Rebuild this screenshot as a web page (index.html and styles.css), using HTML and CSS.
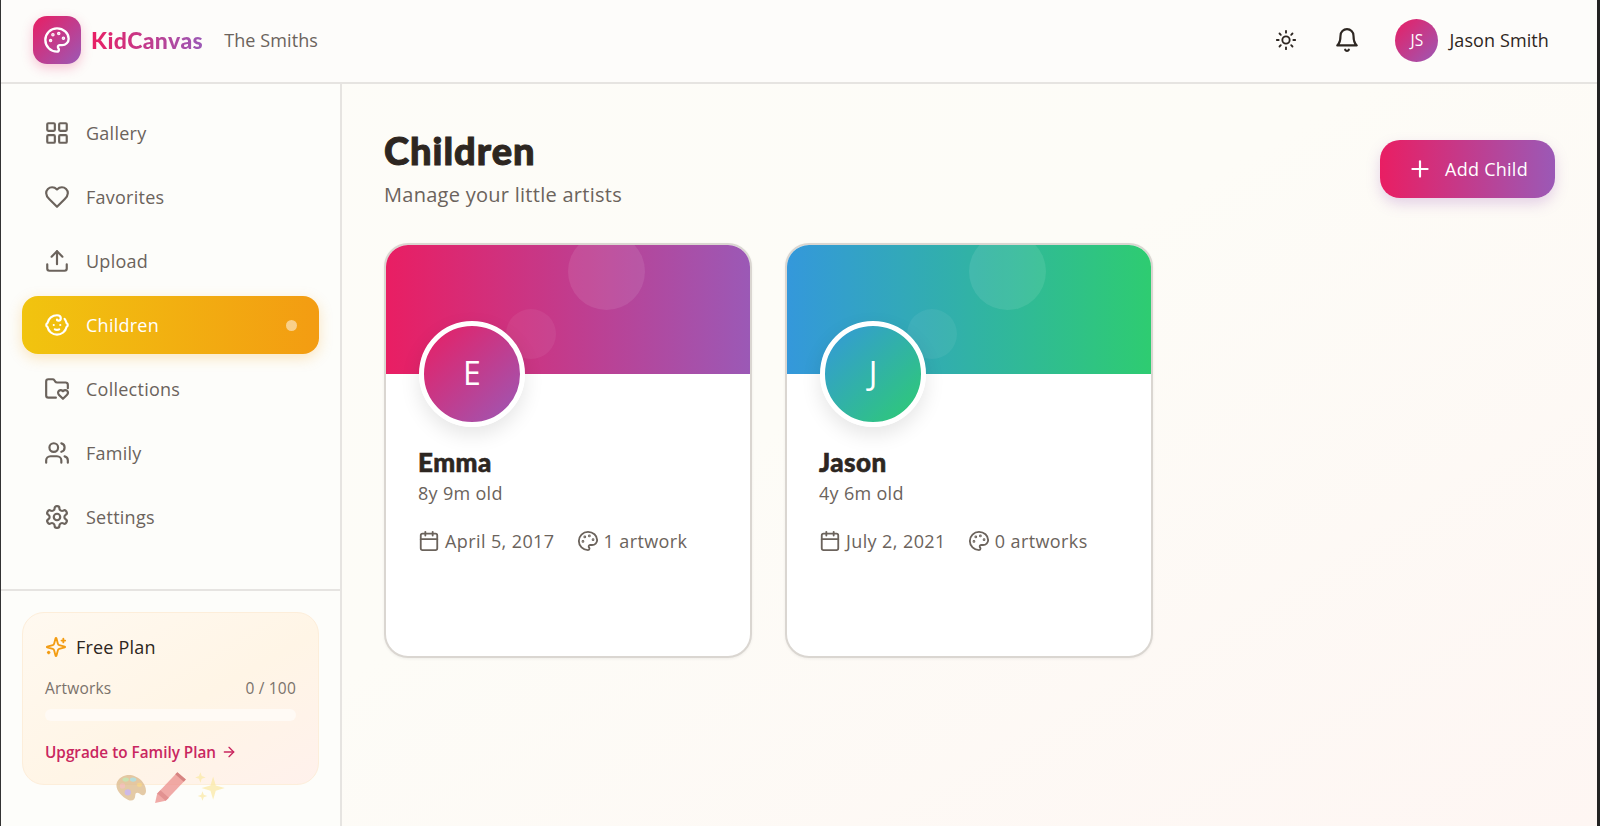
FILE: index.html
```html
<!DOCTYPE html>
<html lang="en">
<head>
    <meta charset="UTF-8">
    <meta name="viewport" content="width=device-width, initial-scale=1.0">
    <title>KidCanvas - Children</title>
    <link rel="stylesheet" href="styles.css">
</head>
<body>
    <svg class="hideclass">
        <defs>
            <symbol id="i-palette" viewBox="0 0 24 24"><circle cx="13.5" cy="6.5" r=".5" fill="currentColor"/><circle cx="17.5" cy="10.5" r=".5" fill="currentColor"/><circle cx="8.5" cy="7.5" r=".5" fill="currentColor"/><circle cx="6.5" cy="12.5" r=".5" fill="currentColor"/><path d="M12 2C6.5 2 2 6.5 2 12s4.5 10 10 10c.926 0 1.648-.746 1.648-1.688 0-.437-.18-.835-.437-1.125-.29-.289-.438-.652-.438-1.125a1.64 1.64 0 0 1 1.668-1.668h1.996c3.051 0 5.555-2.503 5.555-5.554C21.965 6.012 17.461 2 12 2z"/></symbol>
            <symbol id="i-grid" viewBox="0 0 24 24"><rect x="3" y="3" width="7" height="7" rx="1"/><rect x="14" y="3" width="7" height="7" rx="1"/><rect x="14" y="14" width="7" height="7" rx="1"/><rect x="3" y="14" width="7" height="7" rx="1"/></symbol>
            <symbol id="i-heart" viewBox="0 0 24 24"><path d="M19 14c1.49-1.46 3-3.21 3-5.5A5.5 5.5 0 0 0 16.5 3c-1.76 0-3 .5-4.5 2-1.5-1.5-2.74-2-4.5-2A5.5 5.5 0 0 0 2 8.5c0 2.3 1.5 4.05 3 5.5l7 7Z"/></symbol>
            <symbol id="i-upload" viewBox="0 0 24 24"><path d="M21 15v4a2 2 0 0 1-2 2H5a2 2 0 0 1-2-2v-4"/><path d="M17 8l-5-5-5 5"/><path d="M12 3v12"/></symbol>
            <symbol id="i-baby" viewBox="0 0 24 24"><path d="M9 12h.01"/><path d="M15 12h.01"/><path d="M10 16c.5.3 1.2.5 2 .5s1.5-.2 2-.5"/><path d="M19 6.3a9 9 0 0 1 1.8 3.9 2 2 0 0 1 0 3.6 9 9 0 0 1-17.6 0 2 2 0 0 1 0-3.6A9 9 0 0 1 12 3c2 0 3.5 1.1 3.5 2.5s-.9 2.5-2 2.5c-.8 0-1.5-.4-1.5-1"/></symbol>
            <symbol id="i-folder" viewBox="0 0 24 24"><path d="M11 20H4a2 2 0 0 1-2-2V5a2 2 0 0 1 2-2h3.9a2 2 0 0 1 1.69.9l.81 1.2a2 2 0 0 0 1.67.9H20a2 2 0 0 1 2 2v3.3"/><path d="M13.9 17.45c-1.2-1.2-1.14-2.8-.2-3.73a2.43 2.43 0 0 1 3.44 0l.36.34.34-.34a2.43 2.43 0 0 1 3.45-.01c.95.95 1 2.53-.2 3.74L17.5 21Z"/></symbol>
            <symbol id="i-users" viewBox="0 0 24 24"><path d="M16 21v-2a4 4 0 0 0-4-4H6a4 4 0 0 0-4 4v2"/><circle cx="9" cy="7" r="4"/><path d="M22 21v-2a4 4 0 0 0-3-3.87"/><path d="M16 3.13a4 4 0 0 1 0 7.75"/></symbol>
            <symbol id="i-gear" viewBox="0 0 24 24"><path d="M12.22 2h-.44a2 2 0 0 0-2 2v.18a2 2 0 0 1-1 1.73l-.43.25a2 2 0 0 1-2 0l-.15-.08a2 2 0 0 0-2.73.73l-.22.38a2 2 0 0 0 .73 2.73l.15.1a2 2 0 0 1 1 1.72v.51a2 2 0 0 1-1 1.74l-.15.09a2 2 0 0 0-.73 2.73l.22.38a2 2 0 0 0 2.73.73l.15-.08a2 2 0 0 1 2 0l.43.25a2 2 0 0 1 1 1.73V20a2 2 0 0 0 2 2h.44a2 2 0 0 0 2-2v-.18a2 2 0 0 1 1-1.73l.43-.25a2 2 0 0 1 2 0l.15.08a2 2 0 0 0 2.73-.73l.22-.39a2 2 0 0 0-.73-2.73l-.15-.08a2 2 0 0 1-1-1.74v-.5a2 2 0 0 1 1-1.74l.15-.09a2 2 0 0 0 .73-2.73l-.22-.38a2 2 0 0 0-2.73-.73l-.15.08a2 2 0 0 1-2 0l-.43-.25a2 2 0 0 1-1-1.73V4a2 2 0 0 0-2-2z"/><circle cx="12" cy="12" r="3"/></symbol>
            <symbol id="i-sun" viewBox="0 0 24 24"><circle cx="12" cy="12" r="4"/><path d="M12 2v2"/><path d="M12 20v2"/><path d="M4.93 4.93l1.41 1.41"/><path d="M17.66 17.66l1.41 1.41"/><path d="M2 12h2"/><path d="M20 12h2"/><path d="M6.34 17.66l-1.41 1.41"/><path d="M19.07 4.93l-1.41 1.41"/></symbol>
            <symbol id="i-bell" viewBox="0 0 24 24"><path d="M6 8a6 6 0 0 1 12 0c0 7 3 9 3 9H3s3-2 3-9"/><path d="M10.3 21a1.94 1.94 0 0 0 3.4 0"/></symbol>
            <symbol id="i-plus" viewBox="0 0 24 24"><path d="M5 12h14"/><path d="M12 5v14"/></symbol>
            <symbol id="i-calendar" viewBox="0 0 24 24"><path d="M8 2v4"/><path d="M16 2v4"/><rect x="3" y="4" width="18" height="18" rx="2"/><path d="M3 10h18"/></symbol>
            <symbol id="i-sparkles" viewBox="0 0 24 24"><path d="M9.937 15.5A2 2 0 0 0 8.5 14.063l-6.135-1.582a.5.5 0 0 1 0-.962L8.5 9.936A2 2 0 0 0 9.937 8.5l1.582-6.135a.5.5 0 0 1 .963 0L14.063 8.5A2 2 0 0 0 15.5 9.937l6.135 1.581a.5.5 0 0 1 0 .964L15.5 14.063a2 2 0 0 0-1.437 1.437l-1.582 6.135a.5.5 0 0 1-.963 0z"/><path d="M20 3v4"/><path d="M22 5h-4"/><path d="M4 17v2"/><path d="M5 18H3"/></symbol>
            <symbol id="i-arrow" viewBox="0 0 24 24"><path d="M5 12h14"/><path d="M12 5l7 7-7 7"/></symbol>
        </defs>
    </svg>

    <div class="app">
        <header class="topbar">
            <div class="brand">
                <div class="logo"><svg class="icon icon-28"><use href="#i-palette"/></svg></div>
                <span class="brand-name">KidCanvas</span>
                <span class="family-name">The Smiths</span>
            </div>
            <div class="top-actions">
                <svg class="icon icon-22 sun"><use href="#i-sun"/></svg>
                <svg class="icon icon-26 bell"><use href="#i-bell"/></svg>
                <div class="user">
                    <div class="user-avatar">JS</div>
                    <span>Jason Smith</span>
                </div>
            </div>
        </header>

        <div class="layout">
            <aside class="sidebar">
                <nav class="nav">
                    <a class="nav-item"><svg class="icon icon-26"><use href="#i-grid"/></svg>Gallery</a>
                    <a class="nav-item"><svg class="icon icon-26"><use href="#i-heart"/></svg>Favorites</a>
                    <a class="nav-item"><svg class="icon icon-26"><use href="#i-upload"/></svg>Upload</a>
                    <a class="nav-item active"><svg class="icon icon-26"><use href="#i-baby"/></svg>Children<span class="nav-dot"></span></a>
                    <a class="nav-item"><svg class="icon icon-26"><use href="#i-folder"/></svg>Collections</a>
                    <a class="nav-item"><svg class="icon icon-26"><use href="#i-users"/></svg>Family</a>
                    <a class="nav-item"><svg class="icon icon-26"><use href="#i-gear"/></svg>Settings</a>
                </nav>
                <div class="plan-wrap">
                    <div class="plan">
                        <div class="plan-title"><svg class="icon icon-22 spark"><use href="#i-sparkles"/></svg>Free Plan</div>
                        <div class="plan-row"><span>Artworks</span><span>0 / 100</span></div>
                        <div class="plan-bar"></div>
                        <a class="plan-link">Upgrade to Family Plan <svg class="icon icon-16"><use href="#i-arrow"/></svg></a>
                    </div>
                    <div class="stickers">
                        <svg width="34" height="34" viewBox="0 0 32 32">
                            <path d="M3 11c3-6 11-8 17-5 6 2 11 9 10 15-1 4-4 3-6 1-2-1-4-1-4 2 0 4-3 6-7 4C7 25 0 18 3 11z" fill="#dcb98a"/>
                            <ellipse cx="11" cy="9" rx="3" ry="2" fill="#b7dca0"/>
                            <ellipse cx="18" cy="9" rx="3" ry="2" fill="#9fd6d8"/>
                            <ellipse cx="24" cy="14" rx="2.5" ry="2" fill="#f0c870"/>
                            <ellipse cx="8" cy="15" rx="2.5" ry="2.5" fill="#eeb0a8"/>
                            <ellipse cx="13" cy="21" rx="3" ry="3" fill="#bfa4e0"/>
                        </svg>
                        <svg width="34" height="34" viewBox="0 0 32 32">
                            <path d="M1 31l2-9L22 2l8 7L11 29z" fill="#ec8f8c"/>
                            <path d="M6 19l8 7-3 3-8-7z" fill="#d96f6f"/>
                            <path d="M20 4l8 7 2-2-8-7z" fill="#c95f5f"/>
                        </svg>
                        <svg width="34" height="34" viewBox="0 0 32 32">
                            <path d="M18 6l2.5 8.5L29 17l-8.500 2.500L18 28l-2.500-8.500L7 17l8.500-2.500z" fill="#fbeaa8"/>
                            <path d="M6 2l1.300 3.700L11 7 7.300 8.300 6 12 4.700 8.300 1 7l3.700-1.300z" fill="#fbeaa8"/>
                            <path d="M8 20l1.200 3.300L12.500 24.500l-3.300 1.200L8 29l-1.200-3.300L3.500 24.500l3.300-1.200z" fill="#fbeaa8"/>
                        </svg>
                    </div>
                </div>
            </aside>

            <main class="main">
                <div class="page-head">
                    <div>
                        <h1>Children</h1>
                        <p>Manage your little artists</p>
                    </div>
                    <button class="add-btn"><svg class="icon icon-26"><use href="#i-plus"/></svg>Add Child</button>
                </div>

                <div class="cards">
                    <div class="card">
                        <div class="card-banner pink">
                            <span class="bubble big"></span>
                            <span class="bubble small"></span>
                            <div class="child-avatar pink-diag">E</div>
                        </div>
                        <div class="card-body">
                            <h2>Emma</h2>
                            <div class="age">8y 9m old</div>
                            <div class="meta">
                                <span><svg class="icon icon-22"><use href="#i-calendar"/></svg>April 5, 2017</span>
                                <span><svg class="icon icon-22"><use href="#i-palette"/></svg>1 artwork</span>
                            </div>
                        </div>
                    </div>
                    <div class="card">
                        <div class="card-banner green">
                            <span class="bubble big"></span>
                            <span class="bubble small"></span>
                            <div class="child-avatar green-diag">J</div>
                        </div>
                        <div class="card-body">
                            <h2>Jason</h2>
                            <div class="age">4y 6m old</div>
                            <div class="meta">
                                <span><svg class="icon icon-22"><use href="#i-calendar"/></svg>July 2, 2021</span>
                                <span><svg class="icon icon-22"><use href="#i-palette"/></svg>0 artworks</span>
                            </div>
                        </div>
                    </div>
                </div>
            </main>
        </div>
    </div>
</body>
</html>
```

FILE: styles.css
```css
* {
    box-sizing: border-box;
}

.hideclass {
    display: none;
}

body {
    margin: 0;
    height: 826px;
    overflow: hidden;
    font-family: "Open Sans", "Noto Sans", sans-serif;
    color: #2d2621;
    background: linear-gradient(150deg, #fdfcf8 0%, #fdfcf7 50%, #fef6f3 100%);
}

.app {
    height: 826px;
    border-left: 1px solid #333;
    border-right: 3px solid #222;
    display: flex;
    flex-direction: column;
}

.icon {
    fill: none;
    stroke: currentColor;
    stroke-width: 2;
    stroke-linecap: round;
    stroke-linejoin: round;
    flex-shrink: 0;
}

.icon-16 { width: 16px; height: 16px; }
.icon-22 { width: 22px; height: 22px; }
.icon-26 { width: 26px; height: 26px; }
.icon-28 { width: 28px; height: 28px; }

/* top bar */
.topbar {
    height: 84px;
    flex-shrink: 0;
    display: flex;
    align-items: center;
    justify-content: space-between;
    padding: 0 48px 2px 32px;
    background-color: #fdfcfa;
    border-bottom: 2px solid #e6e4e1;
}

.brand {
    display: flex;
    align-items: center;
}

.logo {
    width: 48px;
    height: 48px;
    border-radius: 14px;
    display: flex;
    align-items: center;
    justify-content: center;
    color: #fff;
    background: linear-gradient(135deg, #e91e63, #9b59b6);
    box-shadow: 0 4px 12px rgba(233, 30, 99, 0.25);
}

.brand-name {
    margin-left: 10px;
    font-family: "Lato", sans-serif;
    font-weight: 900;
    font-size: 23px;
    letter-spacing: 0.4px;
    background: linear-gradient(90deg, #e91e63, #9b59b6);
    -webkit-background-clip: text;
    background-clip: text;
    color: transparent;
}

.family-name {
    margin-left: 21px;
    font-size: 18px;
    letter-spacing: 0.1px;
    color: #6b635c;
}

.top-actions {
    display: flex;
    align-items: center;
}

.sun {
    margin-right: 37px;
}

.bell {
    margin-right: 35px;
}

.user {
    display: flex;
    align-items: center;
    gap: 11px;
    font-size: 18px;
    letter-spacing: 0.1px;
}

.user-avatar {
    width: 43px;
    height: 43px;
    border-radius: 50%;
    display: flex;
    align-items: center;
    justify-content: center;
    color: #fff;
    font-size: 15.5px;
    background: linear-gradient(135deg, #e91e63, #9b59b6);
}

/* sidebar */
.layout {
    flex: 1;
    display: flex;
    min-height: 0;
}

.sidebar {
    width: 341px;
    flex-shrink: 0;
    display: flex;
    flex-direction: column;
    background-color: #fdfdfa;
    border-right: 2px solid #e6e4e1;
}

.nav {
    height: 505px;
    padding: 20px 21px 0;
    display: flex;
    flex-direction: column;
    gap: 6px;
}

.nav-item {
    height: 58px;
    flex-shrink: 0;
    display: flex;
    align-items: center;
    gap: 16px;
    padding: 0 22px;
    border-radius: 16px;
    font-size: 18px;
    letter-spacing: 0.25px;
    color: #6b635c;
}

.nav-item.active {
    color: #fff;
    background: linear-gradient(90deg, #f1c40f, #f39c12);
    box-shadow: 0 4px 14px rgba(243, 156, 18, 0.25);
}

.nav-dot {
    width: 11px;
    height: 11px;
    margin-left: auto;
    border-radius: 50%;
    background-color: rgba(255, 255, 255, 0.5);
}

.plan-wrap {
    position: relative;
    flex: 1;
    padding: 21px 21px 0;
    border-top: 2px solid #e6e4e1;
}

.plan {
    height: 173px;
    padding: 22px 22px 0;
    border-radius: 22px;
    border: 1px solid #fdeeda;
    background: linear-gradient(150deg, #fff9f0, #fff5e6 55%, #fff1ec);
}

.plan-title {
    display: flex;
    align-items: center;
    gap: 9px;
    font-size: 18px;
    letter-spacing: 0.2px;
    font-weight: 500;
}

.spark {
    color: #f39c12;
}

.plan-row {
    display: flex;
    justify-content: space-between;
    margin-top: 18px;
    font-size: 15.5px;
    letter-spacing: 0.2px;
    color: #7a726b;
}

.plan-bar {
    height: 12px;
    margin-top: 10px;
    border-radius: 6px;
    background-color: #fffaf5;
}

.plan-link {
    display: flex;
    align-items: center;
    gap: 5px;
    margin-top: 21px;
    font-size: 15.3px;
    font-weight: 600;
    color: #c9265f;
}

.stickers {
    position: absolute;
    left: 113px;
    top: 179px;
    display: flex;
    gap: 6px;
    opacity: 0.75;
}

/* main */
.main {
    flex: 1;
    padding: 44px 42px 0 42px;
}

.page-head {
    display: flex;
    justify-content: space-between;
    align-items: flex-start;
}

h1 {
    margin: 0;
    font-family: "Lato", sans-serif;
    font-weight: 900;
    font-size: 38px;
    line-height: 44px;
    letter-spacing: 1px;
    -webkit-text-stroke: 1px #2d2621;
}

.page-head p {
    margin: 9px 0 0;
    font-size: 20px;
    letter-spacing: 0.27px;
    color: #6b635c;
}

.add-btn {
    width: 175px;
    height: 58px;
    margin-top: 12px;
    display: flex;
    align-items: center;
    justify-content: center;
    gap: 12px;
    border: none;
    border-radius: 20px;
    font-family: inherit;
    font-size: 18px;
    letter-spacing: 0.25px;
    font-weight: 500;
    color: #fff;
    background: linear-gradient(90deg, #e91e63, #9b59b6);
    box-shadow: 0 6px 14px rgba(155, 89, 182, 0.25);
}

.cards {
    display: flex;
    gap: 33px;
    margin-top: 35px;
}

.card {
    width: 368px;
    height: 415px;
    border: 2px solid #dad6d1;
    border-radius: 24px;
    overflow: hidden;
    background-color: #fff;
    box-shadow: 0 1px 3px rgba(0, 0, 0, 0.06);
}

.card-banner {
    position: relative;
    height: 129px;
}

.pink {
    background: linear-gradient(90deg, #e91e63, #9b59b6);
}

.green {
    background: linear-gradient(90deg, #3498db, #2ecc71);
}

.bubble {
    position: absolute;
    border-radius: 50%;
    background-color: rgba(255, 255, 255, 0.09);
}

.bubble.big {
    width: 77px;
    height: 77px;
    left: 182px;
    top: -12px;
}

.bubble.small {
    width: 50px;
    height: 50px;
    left: 120px;
    top: 64px;
    background-color: rgba(255, 255, 255, 0.06);
}

.child-avatar {
    position: absolute;
    left: 33px;
    top: 76px;
    width: 106px;
    height: 106px;
    padding-bottom: 3px;
    border: 5px solid #fff;
    border-radius: 50%;
    display: flex;
    align-items: center;
    justify-content: center;
    color: #fff;
    font-size: 32px;
    box-shadow: 0 8px 20px rgba(0, 0, 0, 0.1);
}

.pink-diag {
    background: linear-gradient(135deg, #e91e63, #9b59b6);
}

.green-diag {
    background: linear-gradient(135deg, #3498db, #2ecc71);
}

.card-body {
    padding: 73px 32px 0;
}

h2 {
    margin: 0;
    font-family: "Lato", sans-serif;
    font-weight: 900;
    font-size: 26px;
    line-height: 30px;
    letter-spacing: 0.5px;
    -webkit-text-stroke: 0.6px #2d2621;
}

.age {
    margin-top: 4px;
    font-size: 18px;
    letter-spacing: 0.3px;
    color: #6b635c;
}

.meta {
    display: flex;
    gap: 22px;
    margin-top: 24px;
    font-size: 18px;
    letter-spacing: 0.4px;
    color: #6b635c;
}

.meta span {
    display: flex;
    align-items: center;
    gap: 5px;
}
```
